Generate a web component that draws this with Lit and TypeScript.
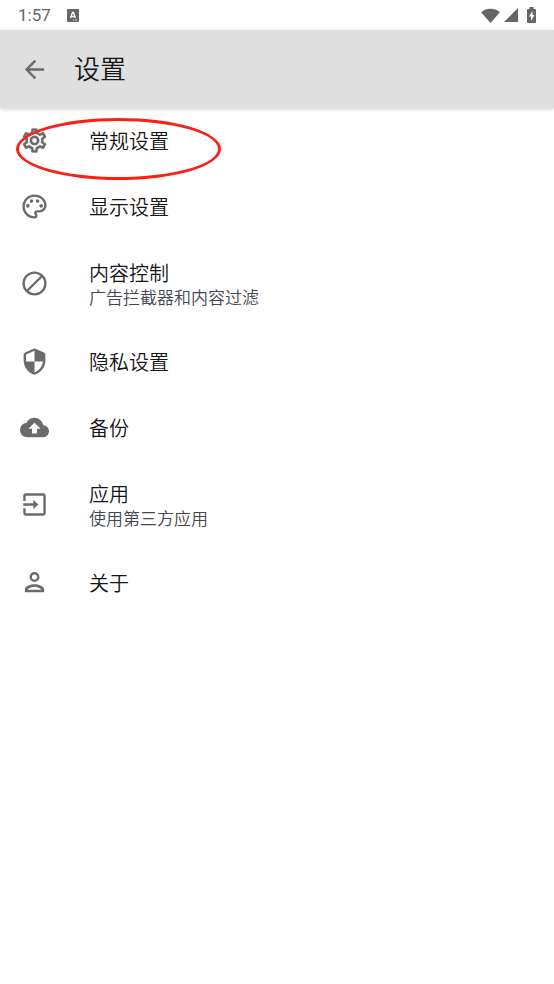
import { LitElement, html, css, svg } from "lit";
import { customElement } from "lit/decorators.js";

const icons = {
  back: svg`<path d="M20 11H7.83l5.59-5.59L12 4l-8 8 8 8 1.41-1.41L7.83 13H20z"/>`,
  gear: svg`<path d="M19.43 12.98c.04-.32.07-.64.07-.98s-.03-.66-.07-.98l2.11-1.65c.19-.15.24-.42.12-.64l-2-3.46a.5.5 0 0 0-.61-.22l-2.49 1c-.52-.4-1.08-.73-1.69-.98l-.38-2.65A.488.488 0 0 0 14 2h-4c-.25 0-.46.18-.49.42l-.38 2.65c-.61.25-1.17.59-1.69.98l-2.49-1a.5.5 0 0 0-.61.22l-2 3.46c-.13.22-.07.49.12.64l2.11 1.65c-.04.32-.07.65-.07.98s.03.66.07.98l-2.11 1.65c-.19.15-.24.42-.12.64l2 3.46a.5.5 0 0 0 .61.22l2.49-1c.52.4 1.08.73 1.69.98l.38 2.65c.03.24.24.42.49.42h4c.25 0 .46-.18.49-.42l.38-2.65c.61-.25 1.17-.59 1.69-.98l2.49 1a.5.5 0 0 0 .61-.22l2-3.46c.12-.22.07-.49-.12-.64zm-1.98-1.71c.04.31.05.52.05.73s-.02.43-.05.73l-.14 1.13.89.7 1.08.84-.7 1.21-1.27-.51-1.04-.42-.9.68c-.43.32-.84.56-1.25.73l-1.06.43-.16 1.13-.2 1.35h-1.4l-.19-1.35-.16-1.13-1.06-.43c-.43-.18-.83-.41-1.23-.71l-.91-.7-1.06.43-1.27.51-.7-1.21 1.08-.84.89-.7-.14-1.13c-.03-.31-.05-.54-.05-.74s.02-.43.05-.73l.14-1.13-.89-.7-1.08-.84.7-1.21 1.27.51 1.04.42.9-.68c.43-.32.84-.56 1.25-.73l1.06-.43.16-1.13.2-1.35h1.39l.19 1.35.16 1.13 1.06.43c.43.18.83.41 1.23.71l.91.7 1.06-.43 1.27-.51.7 1.21-1.07.85-.89.7zM12 8a4 4 0 1 0 0 8 4 4 0 0 0 0-8m0 6a2 2 0 1 1 0-4 2 2 0 0 1 0 4" stroke="currentColor" stroke-width=".2"/>`,
  palette: svg`<path d="M12 22C6.49 22 2 17.51 2 12S6.49 2 12 2s10 4.04 10 9c0 3.31-2.69 6-6 6h-1.77c-.28 0-.5.22-.5.5 0 .12.05.23.13.33.41.47.64 1.06.64 1.67A2.5 2.5 0 0 1 12 22m0-18c-4.41 0-8 3.59-8 8s3.59 8 8 8c.28 0 .5-.22.5-.5a.54.54 0 0 0-.14-.35c-.41-.46-.63-1.05-.63-1.65a2.5 2.5 0 0 1 2.5-2.5H16c2.21 0 4-1.79 4-4 0-3.86-3.59-7-8-7"/><circle cx="6.5" cy="11.5" r="1.5"/><circle cx="9.5" cy="7.5" r="1.5"/><circle cx="14.5" cy="7.5" r="1.5"/><circle cx="17.5" cy="11.5" r="1.5"/>`,
  block: svg`<path d="M12 2a10 10 0 1 0 0 20 10 10 0 0 0 0-20M4 12a8 8 0 0 1 12.9-6.31L5.69 16.9A7.9 7.9 0 0 1 4 12m8 8a7.9 7.9 0 0 1-4.9-1.69L18.31 7.1A8 8 0 0 1 12 20"/>`,
  shield: svg`<path d="M11.2 1.35 4.2 4.45Q3 5 3 6.3V11c0 5.55 3.84 10.74 9 12 5.16-1.26 9-6.45 9-12V6.3Q21 5 19.8 4.45L12.8 1.35Q12 1 11.2 1.35M12 12h7c-.53 4.12-3.28 7.79-7 8.94V12H5V6.3l7-3.11z"/>`,
  cloud: svg`<path d="M19.35 10.04A7.49 7.49 0 0 0 12 4C9.11 4 6.6 5.64 5.35 8.04A5.994 5.994 0 0 0 0 14c0 3.31 2.69 6 6 6h13c2.76 0 5-2.24 5-5 0-2.64-2.05-4.78-4.65-4.96M14 13v4h-4v-4H7l5-5 5 5z"/>`,
  input: svg`<path d="M4.7 2.7h14.6a2 2 0 0 1 2 2v14.6a2 2 0 0 1-2 2H4.7a2 2 0 0 1-2-2V15h2v4.3h14.6V4.700H4.700V9h-2V4.700a2 2 0 0 1 2-2M2.700 11H11V8l4.200 4-4.200 4v-3H2.700z"/>`,
  person: svg`<path d="M12 3.4a4.100 4.100 0 1 0 0 8.200 4.100 4.100 0 0 0 0-8.200m0 2a2.100 2.100 0 1 1 0 4.200 2.100 2.100 0 0 1 0-4.200M12 13.500c-2.900 0-8 1.300-8 4.300V20h16v-2.200c0-3-5.100-4.300-8-4.300m-5.700 4.500c.8-1.200 3.400-2.400 5.700-2.400s4.900 1.200 5.700 2.400z"/>`,
};

const items: { icon: keyof typeof icons; title: string; note?: string; marked?: boolean }[] = [
  { icon: "gear", title: "常规设置", marked: true },
  { icon: "palette", title: "显示设置" },
  { icon: "block", title: "内容控制", note: "广告拦截器和内容过滤" },
  { icon: "shield", title: "隐私设置" },
  { icon: "cloud", title: "备份" },
  { icon: "input", title: "应用", note: "使用第三方应用" },
  { icon: "person", title: "关于" },
];

@customElement("app-root")
export class AppRoot extends LitElement {
  static styles = css`
    :host {
      display: block;
      min-height: 100vh;
      background: #fff;
      color: #151518;
      font-family: Roboto, "Noto Sans CJK SC", sans-serif;
      font-weight: 350;
    }
    svg {
      display: block;
      fill: currentColor;
    }
    .status {
      display: flex;
      align-items: center;
      height: 30px;
      padding: 0 18px;
      color: #666;
      font-size: 17px;
      font-weight: 400;
      line-height: 30px;
    }
    .status .keyboard {
      margin-left: 16px;
    }
    .status .system {
      display: flex;
      align-items: center;
      gap: 4px;
      margin-left: auto;
    }
    .battery {
      margin-left: 5px;
    }
    .bar {
      position: relative;
      display: flex;
      align-items: center;
      gap: 25px;
      height: 78px;
      padding: 0 20px;
      background: #dfdfdf;
      box-shadow: 0 1px 4px rgba(0, 0, 0, 0.2);
    }
    .back {
      padding: 0;
      border: 0;
      background: none;
      color: #6b6b6b;
    }
    h1 {
      margin: 0;
      padding-top: 2px;
      font-size: 26px;
      line-height: 38px;
      font-weight: inherit;
    }
    ul {
      margin: 0;
      padding: 0;
      list-style: none;
    }
    li {
      position: relative;
    }
    .item {
      display: flex;
      align-items: center;
      gap: 40px;
      box-sizing: border-box;
      width: 100%;
      padding: 21px 20px 19px;
      border: 0;
      background: none;
      color: inherit;
      font: inherit;
      text-align: left;
    }
    .icon {
      margin: -7px 0 -5px;
      padding-bottom: 2px;
      color: #6b6b6b;
    }
    .title,
    .note {
      display: block;
    }
    .title {
      font-size: 20px;
      line-height: 26px;
    }
    .note {
      color: #46464f;
      font-size: 17px;
      line-height: 23px;
    }
    .mark {
      position: absolute;
      top: 10px;
      left: 16px;
      box-sizing: border-box;
      width: 205px;
      height: 62px;
      border: 3px solid #fb2013;
      border-radius: 50%;
      pointer-events: none;
    }
  `;

  render() {
    return html`
      <div class="status">
        <time>1:57</time>
        <svg class="keyboard" width="12" height="13" viewBox="0 0 12 13" aria-hidden="true">
          <rect width="12" height="13" rx="1" />
          <path d="M3.500 9 5.500 3.500h1L8.500 9M4.500 7.500h3" fill="none" stroke="#fff" stroke-width="1.300" />
          <path d="M6 11h1m1 0h2" stroke="#fff" stroke-width=".8" />
        </svg>
        <div class="system">
          <svg width="19" height="15" viewBox="0 0 20 16" aria-hidden="true">
            <path d="M0 4.500C5-.3 15-.3 20 4.500L10 16z" />
          </svg>
          <svg width="14" height="14" viewBox="0 0 14 14" aria-hidden="true"><path d="M0 14 14 0v14z" /></svg>
          <svg class="battery" width="9" height="16" viewBox="0 0 9 16" aria-hidden="true">
            <path d="M2.500 0h4v2H8q1 0 1 1v12q0 1-1 1H1q-1 0-1-1V3q0-1 1-1h1.500z" />
            <path d="M5.500 4 2 9.500h2V14l3.500-6h-2z" fill="#fff" />
          </svg>
        </div>
      </div>
      <header class="bar">
        <button class="back" aria-label="返回">
          <svg width="29" height="29" viewBox="0 0 24 24" aria-hidden="true">${icons.back}</svg>
        </button>
        <h1>设置</h1>
      </header>
      <ul>
        ${items.map(
          (item) => html`
            <li>
              <button class="item">
                <svg class="icon" width="29" height="29" viewBox="0 0 24 24" aria-hidden="true">${icons[item.icon]}</svg>
                <span>
                  <span class="title">${item.title}</span>
                  ${item.note ? html`<span class="note">${item.note}</span>` : null}
                </span>
              </button>
              ${item.marked ? html`<span class="mark"></span>` : null}
            </li>
          `
        )}
      </ul>
    `;
  }
}
